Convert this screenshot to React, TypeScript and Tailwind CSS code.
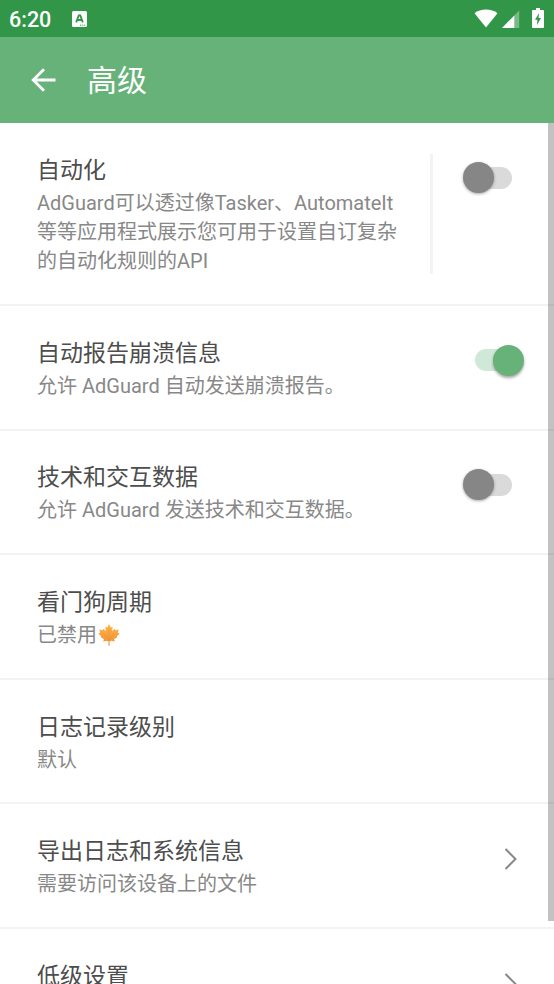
import type { ReactNode } from "react";

type SettingRowProps = {
  title: string;
  description?: ReactNode;
  children?: ReactNode;
};

const MapleLeaf = () => (
  <svg viewBox="0 0 22 22" className="ml-px inline-block w-[22px] h-[22px] -mt-1" aria-hidden="true">
    <defs>
      <linearGradient id="leaf" x1="0" y1="0" x2="0" y2="1">
        <stop offset="0" stopColor="#ffb548" />
        <stop offset="1" stopColor="#f08e34" />
      </linearGradient>
    </defs>
    <path
      fill="url(#leaf)"
      d="M11 0 12.8 3.4 14.6 2.8 14.2 7.2 16.6 4.8 17.4 6.2 20.8 5.6 19.8 8.8 21.8 9.8 18.6 12.4 19.2 13.6 16 15 16.8 17.6 13.2 16.8 11.5 17.4 11.6 21.8H10.4L10.5 17.4 8.8 16.8 5.2 17.6 6 15 2.8 13.6 3.4 12.4.2 9.8 2.2 8.8 1.2 5.6 4.6 6.2 5.4 4.8 7.8 7.2 7.4 2.8 9.2 3.4Z"
    />
    <path
      d="M11 5V17M11 15.5 5.5 9.5M11 15.5 16.5 9.5"
      fill="none"
      stroke="#e28128"
      strokeWidth=".3"
    />
  </svg>
);

const Toggle = ({ checked = false }: { checked?: boolean }) => (
  <div
    role="switch"
    aria-checked={checked}
    className={`flex items-center w-[49px] h-[31px] ${checked ? "mr-[30px]" : "mr-[42px]"}`}
  >
    {checked ? (
      <>
        <div className="w-[46px] h-[22px] rounded-full bg-[#d0e8d7]" />
        <div className="w-[31px] h-[31px] -ml-7 shrink-0 rounded-full bg-[#67b279] shadow-[0_2px_3px_rgba(0,0,0,0.35)]" />
      </>
    ) : (
      <>
        <div className="relative z-10 w-[31px] h-[31px] shrink-0 rounded-full bg-[#868686] shadow-[0_1px_3px_rgba(0,0,0,0.35)]" />
        <div className="w-[46px] h-[22px] -ml-7 shrink-0 rounded-full bg-[#dadada]" />
      </>
    )}
  </div>
);

const Chevron = () => (
  <svg viewBox="0 0 14 24" className="w-3.5 h-6 mr-9 mt-1" fill="none" stroke="#888888" strokeWidth="2">
    <path d="m1.5 2 10 10-10 10" />
  </svg>
);

const SettingRow = ({ title, description, children }: SettingRowProps) => (
  <div className="flex items-start pt-[29.9px] pb-[27.67px] pl-[37px] border-b-2 border-[#f3f3f3]">
    <div className="w-[365px] shrink-0">
      <h2 className="text-[23px] leading-[35px] text-[#4d4d4d]">{title}</h2>
      <p className="mt-px text-[20px] leading-[29px] text-[#888888]">{description}</p>
    </div>
    <div className="flex flex-1 justify-end pt-[9px]">{children}</div>
  </div>
);

const StatusBar = () => (
  <div className="flex h-[37px] items-center bg-[#329648] pl-[9px] pr-2.5 text-white">
    <span className="w-[63px] pt-0.5 text-[21.5px] font-medium leading-none">6:20</span>
    <svg viewBox="0 0 15 16" className="w-[15px] h-4" aria-hidden="true">
      <rect width="15" height="16" rx="1.5" fill="white" />
      <path d="m4.2 11.4 2.5-7h1.6l2.5 7M5.2 9h4.6" fill="none" stroke="#329648" strokeWidth="1.8" />
      <path d="M8 14.2h1.3M10.2 14.2h1.1M12.2 14.2h1.1" stroke="#329648" />
    </svg>
    <div className="ml-auto flex items-center">
      <svg viewBox="0 0 24 19" className="w-6 h-[19px]" fill="white">
        <path d="M12 18.5.5 4.2C6.5-.6 17.5-.6 23.5 4.2Z" />
      </svg>
      <svg viewBox="0 0 18 18" className="ml-1 w-[18px] h-[18px]" fill="white">
        <path d="M17.2.5V18H0Z" opacity=".35" />
        <path d="M12.3 5.5V18H0Z" />
      </svg>
      <svg viewBox="0 0 12 20" className="ml-3 -mt-0.5 w-3 h-5">
        <path d="M4 0h4v2h3q1 0 1 1v16q0 1-1 1H1q-1 0-1-1V3q0-1 1-1h3Z" fill="white" />
        <path d="M7 5 3 11.7h2.4L5 17l4-7H6.5Z" fill="#329648" />
      </svg>
    </div>
  </div>
);

export default function App() {
  return (
    <div className="relative flex h-[984px] w-[554px] flex-col overflow-hidden bg-white font-['Roboto','Noto_Sans_CJK_SC',sans-serif]">
      <StatusBar />

      {/* App bar */}
      <header className="flex h-[86px] shrink-0 items-center bg-[#67b279] pl-[30.5px] text-white">
        <svg viewBox="0 0 25 24" className="w-[25px] h-6" fill="none" stroke="white" strokeWidth="2.8">
          <path d="M13 1.2 2.2 12 13 22.8M2 12h22.5" />
        </svg>
        <h1 className="ml-[31.5px] pt-0.5 text-[30px] leading-10">高级</h1>
      </header>

      {/* Settings list */}
      <main className="flex-1 overflow-hidden pt-[0.5px]">
        <SettingRow
          title="自动化"
          description={
            <>
              AdGuard可以透过像Tasker、AutomateIt
              <br />
              等等应用程式展示您可用于设置自订复杂
              <br />
              的自动化规则的API
            </>
          }
        >
          <div className="-mt-2 mr-auto ml-7 h-[120px] w-[3px] bg-[#f3f3f3]" />
          <Toggle />
        </SettingRow>
        <SettingRow title="自动报告崩溃信息" description="允许 AdGuard 自动发送崩溃报告。">
          <Toggle checked />
        </SettingRow>
        <SettingRow title="技术和交互数据" description="允许 AdGuard 发送技术和交互数据。">
          <Toggle />
        </SettingRow>
        <SettingRow title="看门狗周期" description={<>已禁用<MapleLeaf /></>} />
        <SettingRow title="日志记录级别" description="默认" />
        <SettingRow title="导出日志和系统信息" description="需要访问该设备上的文件">
          <Chevron />
        </SettingRow>
        <SettingRow title="低级设置">
          <Chevron />
        </SettingRow>
      </main>

      {/* Scroll indicator */}
      <div className="absolute right-0 top-[123px] h-[798px] w-1.5 bg-black/24" />
    </div>
  );
}
